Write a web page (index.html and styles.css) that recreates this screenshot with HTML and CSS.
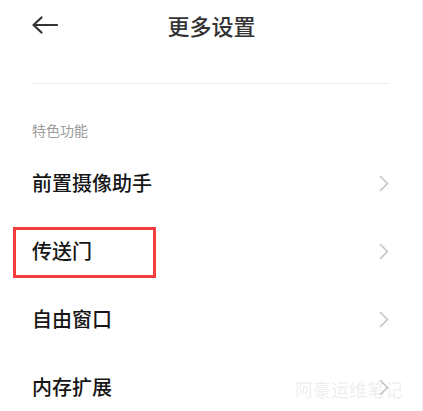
FILE: index.html
```html
<!DOCTYPE html>
<html lang="zh-CN">
<head>
<meta charset="utf-8">
<title>更多设置</title>
<link rel="stylesheet" href="styles.css">
</head>
<body>
<div class="page">
  <header class="header">
    <span class="back">
      <svg width="26" height="18" viewBox="0 0 26 18"><path d="M1.5 9H25M9.5 1.5L1.5 9l8 7.5" fill="none" stroke="#333" stroke-width="2.2" stroke-linecap="round" stroke-linejoin="round"/></svg>
    </span>
    <h1 class="title">更多设置</h1>
  </header>
  <div class="divider"></div>
  <div class="section-label">特色功能</div>
  <ul class="list">
    <li class="row"><span class="label">前置摄像助手</span><svg class="chev" width="10" height="17" viewBox="0 0 10 17"><path d="M1.5 1.5l7 7-7 7" fill="none" stroke="#c4c4c4" stroke-width="1.6" stroke-linecap="round" stroke-linejoin="round"/></svg></li>
    <li class="row"><span class="label">传送门</span><svg class="chev" width="10" height="17" viewBox="0 0 10 17"><path d="M1.5 1.5l7 7-7 7" fill="none" stroke="#c4c4c4" stroke-width="1.6" stroke-linecap="round" stroke-linejoin="round"/></svg><span class="highlight"></span></li>
    <li class="row"><span class="label">自由窗口</span><svg class="chev" width="10" height="17" viewBox="0 0 10 17"><path d="M1.5 1.5l7 7-7 7" fill="none" stroke="#c4c4c4" stroke-width="1.6" stroke-linecap="round" stroke-linejoin="round"/></svg></li>
    <li class="row"><span class="label">内存扩展</span><svg class="chev" width="10" height="17" viewBox="0 0 10 17"><path d="M1.5 1.5l7 7-7 7" fill="none" stroke="#c4c4c4" stroke-width="1.6" stroke-linecap="round" stroke-linejoin="round"/></svg><span class="watermark">阿豪运维笔记</span></li>
  </ul>
</div>
</body>
</html>
```
FILE: styles.css
```css
html, body {
  margin: 0;
  padding: 0;
  background: #fff;
}
body {
  font-family: "Noto Sans CJK SC", "Noto Sans", sans-serif;
  color: #222;
}
.page {
  width: 422px;
  height: 411px;
  overflow: hidden;
  border-right: 1px solid #ececec;
}
.header {
  position: relative;
  height: 50px;
  display: flex;
  align-items: center;
  justify-content: center;
}
.back {
  position: absolute;
  left: 32px;
  top: 16px;
  width: 26px;
  height: 18px;
}
.back svg { display: block; }
.title {
  margin: 0;
  font-size: 22px;
  font-weight: 500;
  color: #333;
  line-height: 30px;
  padding-left: 1px;
}
.divider {
  margin: 33px 32px 0;
  height: 1px;
  background: #eeeeee;
}
.section-label {
  margin: 36px 32px 0;
  font-size: 14px;
  line-height: 20px;
  color: #9a9a9a;
}
.list {
  list-style: none;
  margin: 9px 0 0;
  padding: 0;
}
.row {
  position: relative;
  height: 68px;
  display: flex;
  align-items: center;
  justify-content: space-between;
  padding: 0 33px 0 32px;
}
.label {
  font-size: 20px;
  font-weight: 500;
  color: #161616;
  line-height: 28px;
}
.chev { display: block; }
.highlight {
  position: absolute;
  left: 13px;
  top: 10px;
  width: 137px;
  height: 45px;
  border: 3px solid #f53b3b;
}
.watermark {
  position: absolute;
  left: 295px;
  top: 24px;
  font-size: 18px;
  line-height: 24px;
  color: rgba(0, 0, 0, 0.07);
  font-weight: 500;
}
```
